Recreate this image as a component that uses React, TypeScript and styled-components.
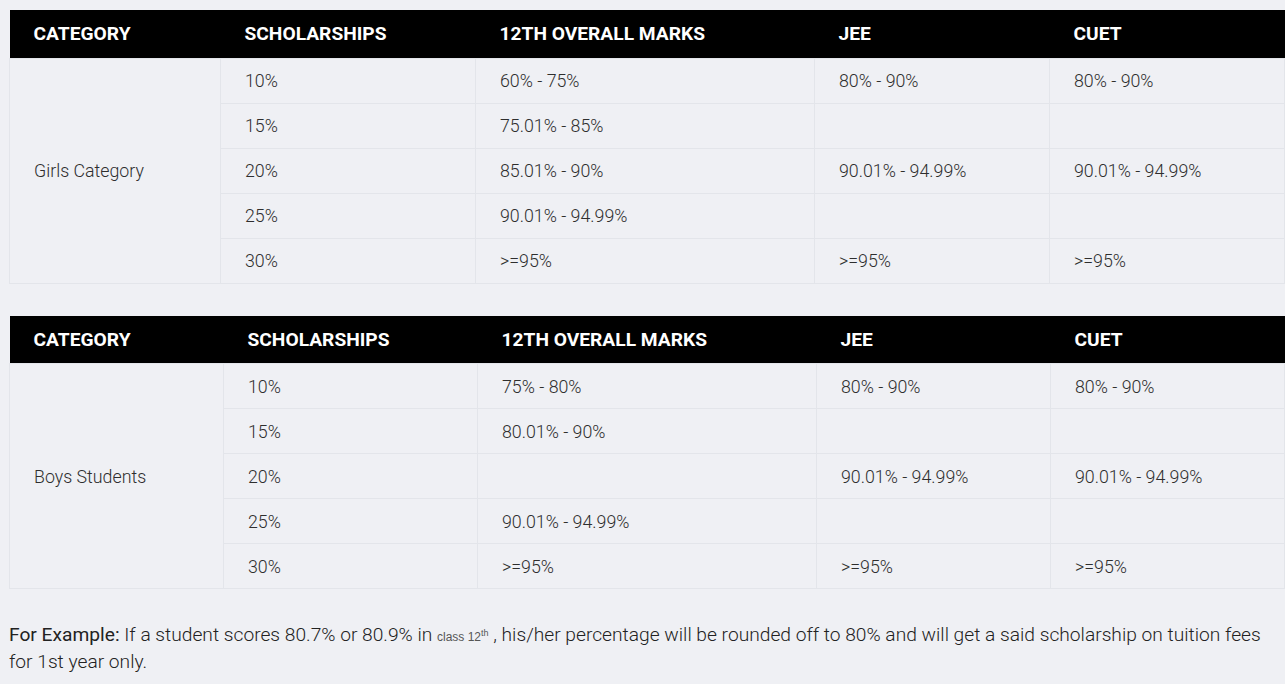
import React from "react";
import styled, { createGlobalStyle } from "styled-components";

const Global = createGlobalStyle`
  html, body { margin: 0; padding: 0; background: #eff0f4; }
  body { font-family: Roboto, "Noto Sans", sans-serif; }
`;

const Page = styled.div`
  padding: 10px 2px 0 9px;
  width: 1275px;
  display: flex;
  flex-direction: column;
  gap: 32px;
`;

const Table = styled.table`
  width: 1275px;
  border-collapse: collapse;
  table-layout: fixed;
  background: #eff0f4;
`;

const HeadCell = styled.th`
  background: #000;
  color: #fff;
  font-family: Roboto, sans-serif;
  font-weight: 700;
  font-size: 19.2px;
  text-align: left;
  height: 48px;
  padding: 0 24px;
  box-sizing: border-box;
  text-transform: uppercase;
`;

const Cell = styled.td`
  border: 1px solid #e3e5ea;
  color: #2e2e2e;
  font-family: Roboto, sans-serif;
  font-weight: 300;
  font-size: 17.8px;
  height: 45px;
  padding: 0 24px;
  box-sizing: border-box;
  vertical-align: middle;
`;

const Note = styled.p`
  margin: 0;
  font-family: Roboto, sans-serif;
  font-weight: 300;
  font-size: 19.2px;
  line-height: 27px;
  color: #222;
  width: 1268px;
`;

const Lead = styled.strong`
  font-weight: 400;
`;

const Small = styled.small`
  font-family: "Liberation Sans", Arial, sans-serif;
  font-size: 12px;
  line-height: 0;
  color: #555;
  sup {
    font-size: 9px;
    line-height: 0;
    vertical-align: 5px;
  }
`;

type Row = [string, string, string, string];

interface Spec {
  category: string;
  widths: number[];
  rows: Row[];
}

const headers = ["Category", "Scholarships", "12th Overall Marks", "JEE", "CUET"];

const tables: Spec[] = [
  {
    category: "Girls Category",
    widths: [211, 255, 339, 235, 235],
    rows: [
      ["10%", "60% - 75%", "80% - 90%", "80% - 90%"],
      ["15%", "75.01% - 85%", "", ""],
      ["20%", "85.01% - 90%", "90.01% - 94.99%", "90.01% - 94.99%"],
      ["25%", "90.01% - 94.99%", "", ""],
      ["30%", ">=95%", ">=95%", ">=95%"],
    ],
  },
  {
    category: "Boys Students",
    widths: [214, 254, 339, 234, 234],
    rows: [
      ["10%", "75% - 80%", "80% - 90%", "80% - 90%"],
      ["15%", "80.01% - 90%", "", ""],
      ["20%", "", "90.01% - 94.99%", "90.01% - 94.99%"],
      ["25%", "90.01% - 94.99%", "", ""],
      ["30%", ">=95%", ">=95%", ">=95%"],
    ],
  },
];

function ScholarshipTable({ spec }: { spec: Spec }) {
  return (
    <Table>
      <colgroup>
        {spec.widths.map((w, i) => (
          <col key={i} style={{ width: w }} />
        ))}
      </colgroup>
      <thead>
        <tr>
          {headers.map((h) => (
            <HeadCell key={h}>{h}</HeadCell>
          ))}
        </tr>
      </thead>
      <tbody>
        {spec.rows.map((r, i) => (
          <tr key={i}>
            {i === 0 && <Cell rowSpan={spec.rows.length}>{spec.category}</Cell>}
            {r.map((c, j) => (
              <Cell key={j}>{c}</Cell>
            ))}
          </tr>
        ))}
      </tbody>
    </Table>
  );
}

export default function App() {
  return (
    <>
      <Global />
      <Page>
        {tables.map((t) => (
          <ScholarshipTable key={t.category} spec={t} />
        ))}
        <Note>
          <Lead>For Example:</Lead> If a student scores 80.7% or 80.9% in{" "}
          <Small>
            class 12<sup>th</sup>
          </Small>{" "}
          , his/her percentage will be rounded off to 80% and will get a said scholarship on tuition fees for
          1st year only.
        </Note>
      </Page>
    </>
  );
}
